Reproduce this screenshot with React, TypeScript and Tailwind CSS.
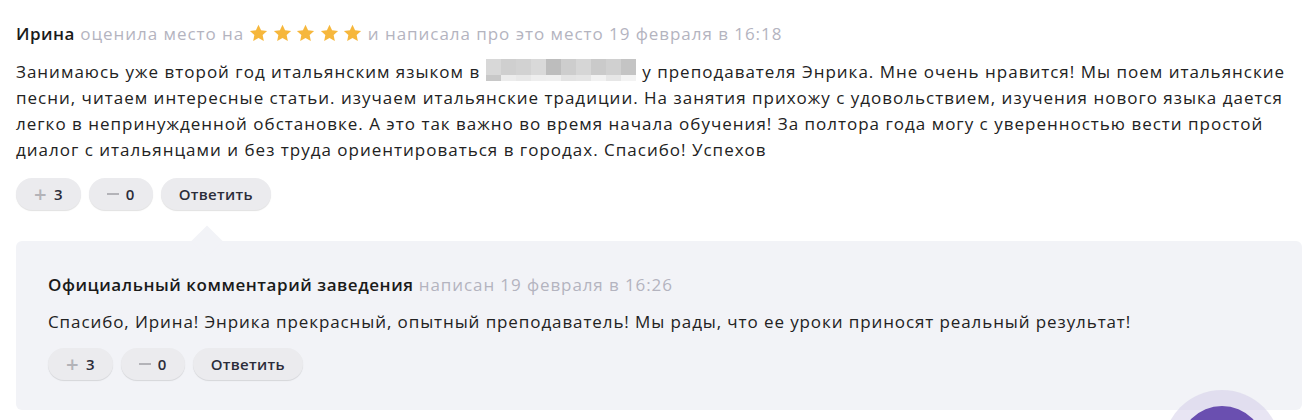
import React from "react";

const font = { fontFamily: "'Open Sans', 'Noto Sans', sans-serif" };

function Star() {
  return (
    <svg width="19" height="18" viewBox="0 0 24 23" className="inline-block">
      <path
        d="M12 0.8l3.3 7.1 7.7 0.9-5.7 5.3 1.5 7.7L12 17.9l-6.8 3.9 1.5-7.7L1 8.8l7.7-0.9z"
        fill="#f6b73c"
      />
    </svg>
  );
}

function Btn({ children }: { children: React.ReactNode }) {
  return (
    <div className="h-8 px-[18px] rounded-full bg-[#ebebee] shadow-[0_1px_1px_rgba(0,0,0,0.12)] flex items-center gap-[7px] text-[15px] font-semibold tracking-[0.3px] text-[#2b2d3a]">
      {children}
    </div>
  );
}

function Actions() {
  return (
    <div className="flex gap-[8px]">
      <Btn>
        <span className="text-[#b3b3b8] text-[22px] font-semibold leading-none -mt-[2px]">+</span>
        <span>3</span>
      </Btn>
      <Btn>
        <span className="block w-[12px] h-[2px] bg-[#b3b3b8]" />
        <span>0</span>
      </Btn>
      <Btn>Ответить</Btn>
    </div>
  );
}

const cellsTop = ["#d8d8d8", "#cfcfcf", "#d2d2d2", "#d9d9d9", "#bdbdbd", "#cdcdcd", "#d6d6d6", "#cacaca", "#d0d0d0", "#c4c4c4"];
const cellsBot = ["#c8c8c8", "#ececec", "#e8e8e8", "#eeeeee", "#efefef", "#e3e3e3", "#e5e5e5", "#f1f1f1", "#e6e6e6", "#f3f3f3"];

function Blur() {
  return (
    <span className="inline-block overflow-hidden align-[-3px] w-[150px] h-[22px] mx-[6px]">
      <span className="flex h-[16px]">
        {cellsTop.map((c, i) => (
          <span key={i} className="flex-1" style={{ background: c }} />
        ))}
      </span>
      <span className="flex h-[6px]">
        {cellsBot.map((c, i) => (
          <span key={i} className="flex-1" style={{ background: c }} />
        ))}
      </span>
    </span>
  );
}

export default function App() {
  return (
    <div className="w-[1315px] h-[420px] bg-white relative overflow-hidden tracking-[0.9px]" style={font}>
      <div className="pl-4 w-[1302px] pt-[21px]">
        <div className="text-[17px] leading-[26px] text-[#b4b4bf] tracking-[0.95px]">
          <span className="font-semibold tracking-[0.5px] text-[#1a1a1a]">Ирина</span> оценила место на{" "}
          <span className="inline-flex gap-[4.5px] align-[-2px]">
            <Star />
            <Star />
            <Star />
            <Star />
            <Star />
          </span>{" "}
          и написала про это место 19 февраля в 16:18
        </div>
        <p className="mt-[12px] text-[17px] leading-[26px] text-[#222] tracking-[1px]">
          Занимаюсь уже второй год итальянским языком в<Blur />у преподавателя Энрика. Мне очень нравится! Мы поем итальянские песни, читаем интересные статьи. изучаем итальянские традиции. На занятия прихожу с удовольствием, изучения нового языка дается легко в непринужденной обстановке. А это так важно во время начала обучения! За полтора года могу с уверенностью вести простой диалог с итальянцами и без труда ориентироваться в городах. Спасибо! Успехов
        </p>
        <div className="mt-[15px]">
          <Actions />
        </div>
        <div className="relative mt-[31px] bg-[#f2f3f7] rounded-[6px] pl-8 pt-[31px] pb-[30px]">
          <div className="absolute -top-[11px] left-[180px] w-[22px] h-[22px] bg-[#f2f3f7] rotate-45" />
          <div className="text-[17px] leading-[26px] text-[#b4b4bf]">
            <span className="font-semibold tracking-[0.55px] text-[#1a1a1a]">Официальный комментарий заведения</span> написан 19 февраля в 16:26
          </div>
          <p className="mt-[11px] text-[17px] leading-[26px] text-[#222]">
            Спасибо, Ирина! Энрика прекрасный, опытный преподаватель! Мы рады, что ее уроки приносят реальный результат!
          </p>
          <div className="mt-[13px]">
            <Actions />
          </div>
        </div>
      </div>
      <div className="absolute left-[1163px] top-[390px] w-[118px] h-[118px] rounded-full bg-[rgba(205,198,228,0.45)] flex items-center justify-center">
        <div className="w-[86px] h-[86px] rounded-full bg-[#6a4fb0]" />
      </div>
    </div>
  );
}
